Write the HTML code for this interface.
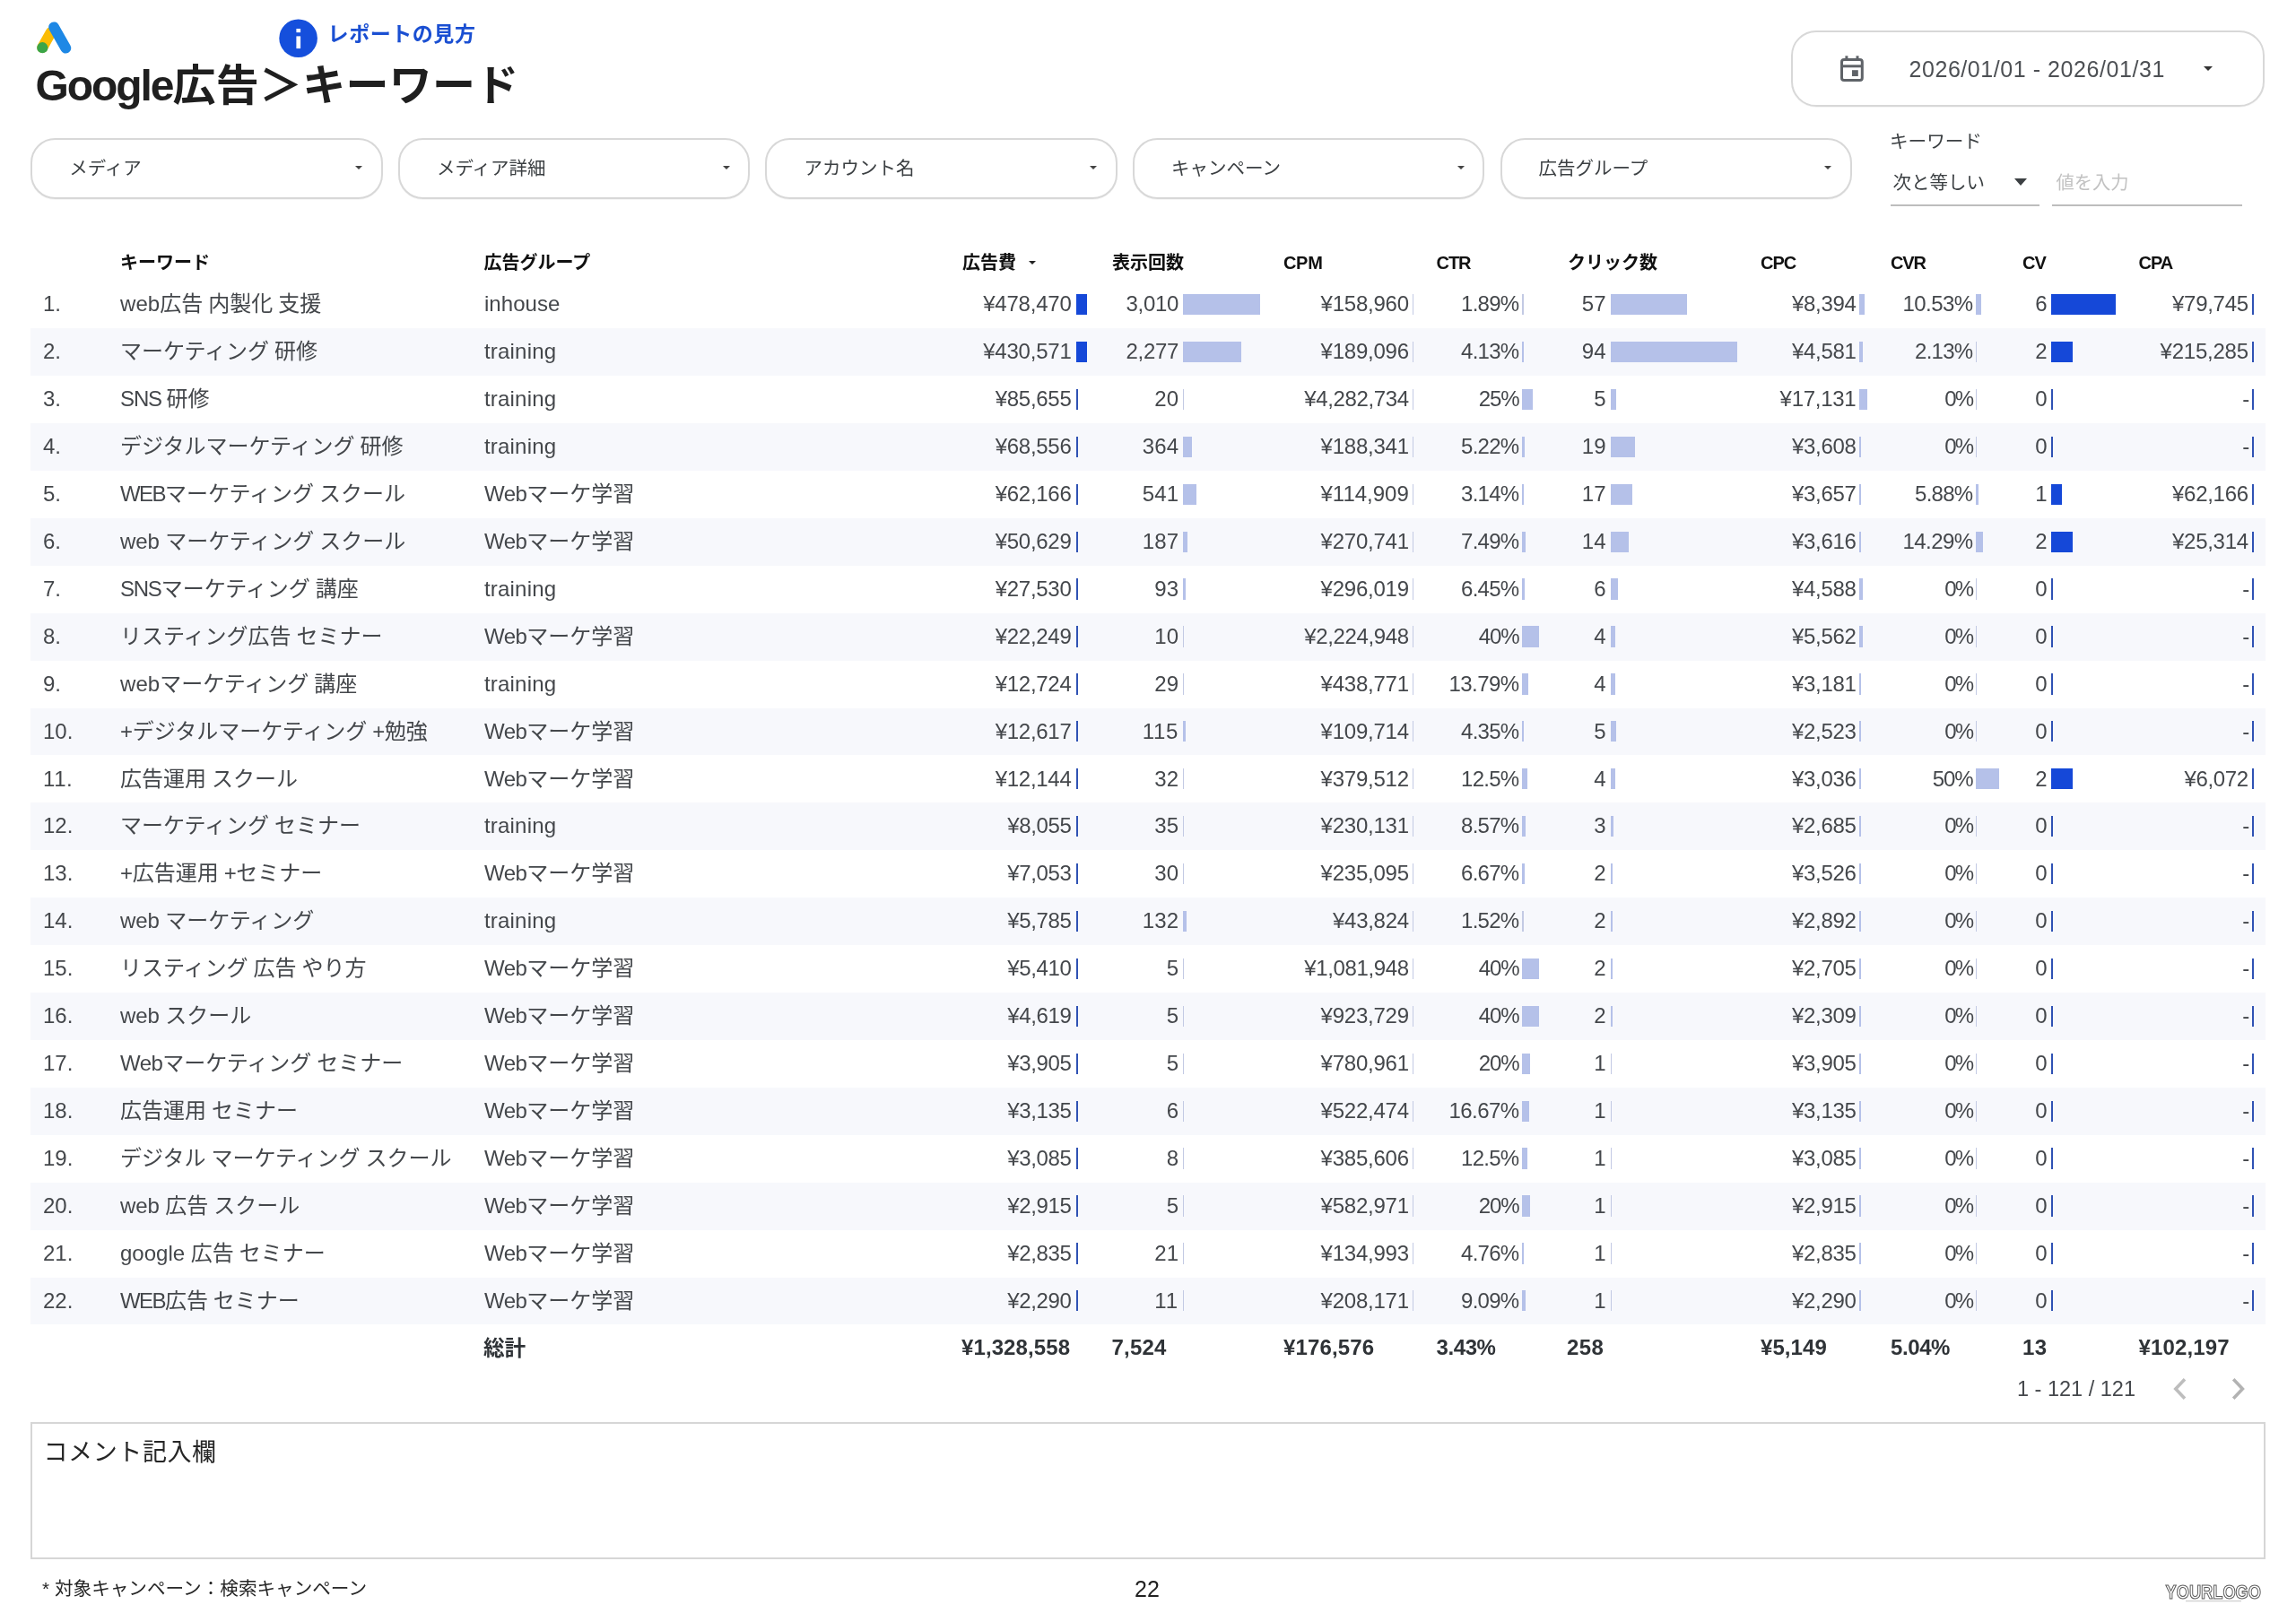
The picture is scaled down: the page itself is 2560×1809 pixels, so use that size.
<!DOCTYPE html>
<html lang="ja">
<head>
<meta charset="utf-8">
<title>Google広告＞キーワード</title>
<style>
*{box-sizing:border-box;margin:0;padding:0}
html,body{width:2560px;height:1809px;background:#fff;overflow:hidden}
body{position:relative;will-change:transform;font-family:"Liberation Sans","Noto Sans CJK JP",sans-serif;color:#3c4043}
.abs{position:absolute;white-space:nowrap}
.stripe{position:absolute;left:34px;width:2491.5px;height:52.92px;background:#f7f8fc}
.c{position:absolute;white-space:nowrap;font-size:24px;line-height:52px;height:52px;color:#44474b}
.n{}
.b{position:absolute;height:23.3px}
.h{position:absolute;white-space:nowrap;font-size:20px;font-weight:700;color:#111;line-height:30px;top:278px}
.tot{position:absolute;white-space:nowrap;font-size:24px;font-weight:700;color:#2f3337;line-height:40px;top:1483px}
.dd{position:absolute;top:153.6px;width:392.3px;height:68.1px;border:2px solid #d8d8d8;border-radius:27.5px;background:#fff;box-shadow:0 1px 0 rgba(0,0,0,.04)}
.dd span{position:absolute;left:41px;top:0;line-height:64px;font-size:20.5px;color:#3c4043;white-space:nowrap}
.dd i{position:absolute;right:20.6px;top:29.3px;width:0;height:0;border-left:4.3px solid transparent;border-right:4.3px solid transparent;border-top:4.6px solid #444}
</style>
</head>
<body>
<!-- logo -->
<svg class="abs" style="left:36px;top:18px" width="50" height="48" viewBox="36 18 50 48">
<line x1="47.3" y1="53" x2="56.6" y2="36.3" stroke="#fbbc04" stroke-width="12" stroke-linecap="round"/>
<line x1="60.1" y1="30.4" x2="73.3" y2="53.6" stroke="#1e88e5" stroke-width="12" stroke-linecap="round"/>
<circle cx="47.3" cy="53.2" r="6.1" fill="#3ba548"/>
</svg>
<!-- info -->
<svg class="abs" style="left:310px;top:20px" width="46" height="46" viewBox="310 20 46 46">
<circle cx="332.6" cy="42.7" r="21.3" fill="#154fdc"/>
<rect x="330.4" y="32" width="4.7" height="4.2" fill="#fff"/>
<rect x="330.4" y="40.4" width="4.7" height="13.7" fill="#fff"/>
</svg>
<div class="abs" style="left:365.6px;top:19.6px;font-size:23px;line-height:36px;font-weight:700;color:#1a4fd2;letter-spacing:0.55px">レポートの見方</div>
<div class="abs" id="title" style="left:39.5px;top:60px;font-size:48px;line-height:72px;font-weight:700;color:#1f1f1f"><span style="letter-spacing:-2.06px">Google</span><span style="letter-spacing:0.25px">広告＞キーワード</span></div>

<!-- date range -->
<div class="abs" style="left:1996.5px;top:34px;width:528.6px;height:84.6px;border:2px solid #d8d8d8;border-radius:28px;box-shadow:0 1px 0 rgba(0,0,0,.04)"></div>
<svg class="abs" style="left:2048px;top:58px" width="34" height="36" viewBox="2048 58 34 36" fill="none" stroke="#5f6368" stroke-width="3">
<rect x="2053.5" y="66.5" width="22.8" height="23" rx="2.6"/>
<line x1="2053" y1="73.8" x2="2077" y2="73.8"/>
<line x1="2058.9" y1="62.3" x2="2058.9" y2="67" stroke-linecap="butt"/>
<line x1="2071" y1="62.3" x2="2071" y2="67"/>
<rect x="2065" y="78.2" width="6.8" height="6.8" fill="#5f6368" stroke="none"/>
</svg>
<div class="abs" id="date" style="left:2128.5px;top:59px;font-size:25px;line-height:36px;color:#4d5054"><span style="letter-spacing:0.56px">2026/01/01 - 2026/01/31</span></div>
<div class="abs" style="left:2456.5px;top:74px;width:0;height:0;border-left:5.4px solid transparent;border-right:5.4px solid transparent;border-top:5.6px solid #333"></div>

<!-- dropdown filters -->
<div class="dd" style="left:34.3px"><span>メディア</span><i></i></div>
<div class="dd" style="left:443.9px"><span>メディア詳細</span><i></i></div>
<div class="dd" style="left:853.4px"><span>アカウント名</span><i></i></div>
<div class="dd" style="left:1263px"><span>キャンペーン</span><i></i></div>
<div class="dd" style="left:1672.5px"><span>広告グループ</span><i></i></div>

<!-- keyword filter -->
<div class="abs" style="left:2107px;top:142.5px;font-size:20.6px;line-height:30px;color:#3c4043">キーワード</div>
<div class="abs" style="left:2110.5px;top:189.4px;font-size:20.5px;line-height:30px;color:#3c4043">次と等しい</div>
<div class="abs" style="left:2246px;top:199.3px;width:0;height:0;border-left:7.3px solid transparent;border-right:7.3px solid transparent;border-top:8.2px solid #3c4043"></div>
<div class="abs" style="left:2107.8px;top:228.2px;width:166.5px;height:1.8px;background:#bdbdbd"></div>
<div class="abs" style="left:2292.5px;top:189.4px;font-size:20.3px;line-height:30px;color:#c2c2c2">値を入力</div>
<div class="abs" style="left:2288px;top:228.2px;width:212px;height:1.8px;background:#bdbdbd"></div>

<!-- table header -->
<div class="h" style="left:134px">キーワード</div>
<div class="h" style="left:539.5px">広告グループ</div>
<div class="h" style="left:1073px">広告費</div>
<div class="abs" style="left:1147.3px;top:290.8px;width:0;height:0;border-left:4.4px solid transparent;border-right:4.4px solid transparent;border-top:4.9px solid #222"></div>
<div class="h" style="left:1240px">表示回数</div>
<div class="h" style="left:1431px"><span style="letter-spacing:-0.32px">CPM</span></div>
<div class="h" style="left:1601.5px"><span style="letter-spacing:-1.03px">CTR</span></div>
<div class="h" style="left:1748px">クリック数</div>
<div class="h" style="left:1963px"><span style="letter-spacing:-1.06px">CPC</span></div>
<div class="h" style="left:2108px"><span style="letter-spacing:-1.09px">CVR</span></div>
<div class="h" style="left:2255px"><span style="letter-spacing:-0.82px">CV</span></div>
<div class="h" style="left:2384.5px"><span style="letter-spacing:-0.98px">CPA</span></div>
<!-- rows -->
<div class="c" style="left:48px;top:313.35px"><span style="letter-spacing:-0.09px">1.</span></div>
<div class="c" style="left:134px;top:313.35px"><span style="letter-spacing:0.07px">web</span>広告<span style="letter-spacing:-0.72px"> </span>内製化<span style="letter-spacing:-0.72px"> </span>支援</div>
<div class="c" style="left:540px;top:313.35px"><span style="letter-spacing:0.04px">inhouse</span></div>
<div class="c n" style="right:1365.5px;top:313.35px"><span style="letter-spacing:-0.23px">¥478,470</span></div>
<div class="b" style="left:1199.7px;top:327.95px;width:12.0px;background:#1548d8"></div>
<div class="c n" style="right:1245.8px;top:313.35px"><span style="letter-spacing:-0.28px">3,010</span></div>
<div class="b" style="left:1319.0px;top:327.95px;width:85.5px;background:#b5c1e9"></div>
<div class="c n" style="right:989.2px;top:313.35px"><span style="letter-spacing:-0.23px">¥158,960</span></div>
<div class="b" style="left:1575.4px;top:327.95px;width:1.0px;background:#c3cae4"></div>
<div class="c n" style="right:866.6px;top:313.35px"><span style="letter-spacing:-0.74px">1.89%</span></div>
<div class="b" style="left:1697.3px;top:327.95px;width:1.3px;background:#c3cae4"></div>
<div class="c n" style="right:769.2px;top:313.35px"><span style="letter-spacing:0.14px">57</span></div>
<div class="b" style="left:1796.0px;top:327.95px;width:84.7px;background:#b5c1e9"></div>
<div class="c n" style="right:490.6px;top:313.35px"><span style="letter-spacing:-0.35px">¥8,394</span></div>
<div class="b" style="left:2073.3px;top:327.95px;width:5.7px;background:#b5c1e9"></div>
<div class="c n" style="right:360.6px;top:313.35px"><span style="letter-spacing:-0.59px">10.53%</span></div>
<div class="b" style="left:2203.3px;top:327.95px;width:5.5px;background:#b5c1e9"></div>
<div class="c n" style="right:277.2px;top:313.35px"><span style="letter-spacing:0.14px">6</span></div>
<div class="b" style="left:2286.7px;top:327.95px;width:72.6px;background:#1548d8"></div>
<div class="c n" style="right:53.2px;top:313.35px"><span style="letter-spacing:-0.28px">¥79,745</span></div>
<div class="b" style="left:2510.7px;top:327.95px;width:2.2px;background:#2f52b4"></div>
<div class="stripe" style="top:366.27px"></div>
<div class="c" style="left:48px;top:366.27px"><span style="letter-spacing:-0.09px">2.</span></div>
<div class="c" style="left:134px;top:366.27px">マーケティング<span style="letter-spacing:-0.72px"> </span>研修</div>
<div class="c" style="left:540px;top:366.27px"><span style="letter-spacing:0.19px">training</span></div>
<div class="c n" style="right:1365.5px;top:366.27px"><span style="letter-spacing:-0.23px">¥430,571</span></div>
<div class="b" style="left:1199.7px;top:380.87px;width:12.0px;background:#1548d8"></div>
<div class="c n" style="right:1245.8px;top:366.27px"><span style="letter-spacing:-0.28px">2,277</span></div>
<div class="b" style="left:1319.0px;top:380.87px;width:64.7px;background:#b5c1e9"></div>
<div class="c n" style="right:989.2px;top:366.27px"><span style="letter-spacing:-0.23px">¥189,096</span></div>
<div class="b" style="left:1575.4px;top:380.87px;width:1.0px;background:#c3cae4"></div>
<div class="c n" style="right:866.6px;top:366.27px"><span style="letter-spacing:-0.74px">4.13%</span></div>
<div class="b" style="left:1697.3px;top:380.87px;width:1.9px;background:#b5c1e9"></div>
<div class="c n" style="right:769.2px;top:366.27px"><span style="letter-spacing:0.14px">94</span></div>
<div class="b" style="left:1796.0px;top:380.87px;width:140.7px;background:#b5c1e9"></div>
<div class="c n" style="right:490.6px;top:366.27px"><span style="letter-spacing:-0.35px">¥4,581</span></div>
<div class="b" style="left:2073.3px;top:380.87px;width:3.7px;background:#b5c1e9"></div>
<div class="c n" style="right:360.6px;top:366.27px"><span style="letter-spacing:-0.74px">2.13%</span></div>
<div class="b" style="left:2203.3px;top:380.87px;width:1.1px;background:#c3cae4"></div>
<div class="c n" style="right:277.2px;top:366.27px"><span style="letter-spacing:0.14px">2</span></div>
<div class="b" style="left:2286.7px;top:380.87px;width:24.2px;background:#1548d8"></div>
<div class="c n" style="right:53.2px;top:366.27px"><span style="letter-spacing:-0.23px">¥215,285</span></div>
<div class="b" style="left:2510.7px;top:380.87px;width:2.2px;background:#2f52b4"></div>
<div class="c" style="left:48px;top:419.18px"><span style="letter-spacing:-0.09px">3.</span></div>
<div class="c" style="left:134px;top:419.18px"><span style="letter-spacing:-1.11px">SNS </span>研修</div>
<div class="c" style="left:540px;top:419.18px"><span style="letter-spacing:0.19px">training</span></div>
<div class="c n" style="right:1365.5px;top:419.18px"><span style="letter-spacing:-0.28px">¥85,655</span></div>
<div class="b" style="left:1199.7px;top:433.78px;width:2.1px;background:#2f52b4"></div>
<div class="c n" style="right:1245.8px;top:419.18px"><span style="letter-spacing:0.14px">20</span></div>
<div class="b" style="left:1319.0px;top:433.78px;width:1.0px;background:#c3cae4"></div>
<div class="c n" style="right:989.2px;top:419.18px"><span style="letter-spacing:-0.36px">¥4,282,734</span></div>
<div class="b" style="left:1575.4px;top:433.78px;width:1.0px;background:#c3cae4"></div>
<div class="c n" style="right:866.6px;top:419.18px"><span style="letter-spacing:-1.16px">25%</span></div>
<div class="b" style="left:1697.3px;top:433.78px;width:11.4px;background:#b5c1e9"></div>
<div class="c n" style="right:769.2px;top:419.18px"><span style="letter-spacing:0.14px">5</span></div>
<div class="b" style="left:1796.0px;top:433.78px;width:6.1px;background:#b5c1e9"></div>
<div class="c n" style="right:490.6px;top:419.18px"><span style="letter-spacing:-0.28px">¥17,131</span></div>
<div class="b" style="left:2073.3px;top:433.78px;width:8.3px;background:#b5c1e9"></div>
<div class="c n" style="right:360.6px;top:419.18px"><span style="letter-spacing:-1.80px">0%</span></div>
<div class="b" style="left:2203.3px;top:433.78px;width:1.0px;background:#c3cae4"></div>
<div class="c n" style="right:277.2px;top:419.18px"><span style="letter-spacing:0.14px">0</span></div>
<div class="b" style="left:2286.7px;top:433.78px;width:2.2px;background:#2f52b4"></div>
<div class="c n" style="right:53.2px;top:419.18px"><span style="letter-spacing:-1.36px">-</span></div>
<div class="b" style="left:2510.7px;top:433.78px;width:2.2px;background:#2f52b4"></div>
<div class="stripe" style="top:472.10px"></div>
<div class="c" style="left:48px;top:472.10px"><span style="letter-spacing:-0.09px">4.</span></div>
<div class="c" style="left:134px;top:472.10px">デジタルマーケティング<span style="letter-spacing:-0.72px"> </span>研修</div>
<div class="c" style="left:540px;top:472.10px"><span style="letter-spacing:0.19px">training</span></div>
<div class="c n" style="right:1365.5px;top:472.10px"><span style="letter-spacing:-0.28px">¥68,556</span></div>
<div class="b" style="left:1199.7px;top:486.70px;width:2.1px;background:#2f52b4"></div>
<div class="c n" style="right:1245.8px;top:472.10px"><span style="letter-spacing:0.14px">364</span></div>
<div class="b" style="left:1319.0px;top:486.70px;width:10.3px;background:#b5c1e9"></div>
<div class="c n" style="right:989.2px;top:472.10px"><span style="letter-spacing:-0.23px">¥188,341</span></div>
<div class="b" style="left:1575.4px;top:486.70px;width:1.0px;background:#c3cae4"></div>
<div class="c n" style="right:866.6px;top:472.10px"><span style="letter-spacing:-0.74px">5.22%</span></div>
<div class="b" style="left:1697.3px;top:486.70px;width:2.4px;background:#b5c1e9"></div>
<div class="c n" style="right:769.2px;top:472.10px"><span style="letter-spacing:0.14px">19</span></div>
<div class="b" style="left:1796.0px;top:486.70px;width:27.2px;background:#b5c1e9"></div>
<div class="c n" style="right:490.6px;top:472.10px"><span style="letter-spacing:-0.35px">¥3,608</span></div>
<div class="b" style="left:2073.3px;top:486.70px;width:2.0px;background:#b5c1e9"></div>
<div class="c n" style="right:360.6px;top:472.10px"><span style="letter-spacing:-1.80px">0%</span></div>
<div class="b" style="left:2203.3px;top:486.70px;width:1.0px;background:#c3cae4"></div>
<div class="c n" style="right:277.2px;top:472.10px"><span style="letter-spacing:0.14px">0</span></div>
<div class="b" style="left:2286.7px;top:486.70px;width:2.2px;background:#2f52b4"></div>
<div class="c n" style="right:53.2px;top:472.10px"><span style="letter-spacing:-1.36px">-</span></div>
<div class="b" style="left:2510.7px;top:486.70px;width:2.2px;background:#2f52b4"></div>
<div class="c" style="left:48px;top:525.01px"><span style="letter-spacing:-0.09px">5.</span></div>
<div class="c" style="left:134px;top:525.01px"><span style="letter-spacing:-1.59px">WEB</span>マーケティング<span style="letter-spacing:-0.72px"> </span>スクール</div>
<div class="c" style="left:540px;top:525.01px"><span style="letter-spacing:-0.59px">Web</span>マーケ学習</div>
<div class="c n" style="right:1365.5px;top:525.01px"><span style="letter-spacing:-0.28px">¥62,166</span></div>
<div class="b" style="left:1199.7px;top:539.61px;width:2.1px;background:#2f52b4"></div>
<div class="c n" style="right:1245.8px;top:525.01px"><span style="letter-spacing:0.14px">541</span></div>
<div class="b" style="left:1319.0px;top:539.61px;width:15.3px;background:#b5c1e9"></div>
<div class="c n" style="right:989.2px;top:525.01px">¥114,909</div>
<div class="b" style="left:1575.4px;top:539.61px;width:1.0px;background:#c3cae4"></div>
<div class="c n" style="right:866.6px;top:525.01px"><span style="letter-spacing:-0.74px">3.14%</span></div>
<div class="b" style="left:1697.3px;top:539.61px;width:1.4px;background:#b5c1e9"></div>
<div class="c n" style="right:769.2px;top:525.01px"><span style="letter-spacing:0.14px">17</span></div>
<div class="b" style="left:1796.0px;top:539.61px;width:24.2px;background:#b5c1e9"></div>
<div class="c n" style="right:490.6px;top:525.01px"><span style="letter-spacing:-0.35px">¥3,657</span></div>
<div class="b" style="left:2073.3px;top:539.61px;width:2.0px;background:#b5c1e9"></div>
<div class="c n" style="right:360.6px;top:525.01px"><span style="letter-spacing:-0.74px">5.88%</span></div>
<div class="b" style="left:2203.3px;top:539.61px;width:3.1px;background:#b5c1e9"></div>
<div class="c n" style="right:277.2px;top:525.01px"><span style="letter-spacing:0.14px">1</span></div>
<div class="b" style="left:2286.7px;top:539.61px;width:12.1px;background:#1548d8"></div>
<div class="c n" style="right:53.2px;top:525.01px"><span style="letter-spacing:-0.28px">¥62,166</span></div>
<div class="b" style="left:2510.7px;top:539.61px;width:2.2px;background:#2f52b4"></div>
<div class="stripe" style="top:577.93px"></div>
<div class="c" style="left:48px;top:577.93px"><span style="letter-spacing:-0.09px">6.</span></div>
<div class="c" style="left:134px;top:577.93px"><span style="letter-spacing:-0.12px">web </span>マーケティング<span style="letter-spacing:-0.72px"> </span>スクール</div>
<div class="c" style="left:540px;top:577.93px"><span style="letter-spacing:-0.59px">Web</span>マーケ学習</div>
<div class="c n" style="right:1365.5px;top:577.93px"><span style="letter-spacing:-0.28px">¥50,629</span></div>
<div class="b" style="left:1199.7px;top:592.53px;width:2.1px;background:#2f52b4"></div>
<div class="c n" style="right:1245.8px;top:577.93px"><span style="letter-spacing:0.14px">187</span></div>
<div class="b" style="left:1319.0px;top:592.53px;width:5.3px;background:#b5c1e9"></div>
<div class="c n" style="right:989.2px;top:577.93px"><span style="letter-spacing:-0.23px">¥270,741</span></div>
<div class="b" style="left:1575.4px;top:592.53px;width:1.0px;background:#c3cae4"></div>
<div class="c n" style="right:866.6px;top:577.93px"><span style="letter-spacing:-0.74px">7.49%</span></div>
<div class="b" style="left:1697.3px;top:592.53px;width:3.4px;background:#b5c1e9"></div>
<div class="c n" style="right:769.2px;top:577.93px"><span style="letter-spacing:0.14px">14</span></div>
<div class="b" style="left:1796.0px;top:592.53px;width:19.7px;background:#b5c1e9"></div>
<div class="c n" style="right:490.6px;top:577.93px"><span style="letter-spacing:-0.35px">¥3,616</span></div>
<div class="b" style="left:2073.3px;top:592.53px;width:2.0px;background:#b5c1e9"></div>
<div class="c n" style="right:360.6px;top:577.93px"><span style="letter-spacing:-0.59px">14.29%</span></div>
<div class="b" style="left:2203.3px;top:592.53px;width:7.4px;background:#b5c1e9"></div>
<div class="c n" style="right:277.2px;top:577.93px"><span style="letter-spacing:0.14px">2</span></div>
<div class="b" style="left:2286.7px;top:592.53px;width:24.2px;background:#1548d8"></div>
<div class="c n" style="right:53.2px;top:577.93px"><span style="letter-spacing:-0.28px">¥25,314</span></div>
<div class="b" style="left:2510.7px;top:592.53px;width:2.2px;background:#2f52b4"></div>
<div class="c" style="left:48px;top:630.85px"><span style="letter-spacing:-0.09px">7.</span></div>
<div class="c" style="left:134px;top:630.85px"><span style="letter-spacing:-1.24px">SNS</span>マーケティング<span style="letter-spacing:-0.72px"> </span>講座</div>
<div class="c" style="left:540px;top:630.85px"><span style="letter-spacing:0.19px">training</span></div>
<div class="c n" style="right:1365.5px;top:630.85px"><span style="letter-spacing:-0.28px">¥27,530</span></div>
<div class="b" style="left:1199.7px;top:645.45px;width:2.1px;background:#2f52b4"></div>
<div class="c n" style="right:1245.8px;top:630.85px"><span style="letter-spacing:0.14px">93</span></div>
<div class="b" style="left:1319.0px;top:645.45px;width:2.6px;background:#b5c1e9"></div>
<div class="c n" style="right:989.2px;top:630.85px"><span style="letter-spacing:-0.23px">¥296,019</span></div>
<div class="b" style="left:1575.4px;top:645.45px;width:1.0px;background:#c3cae4"></div>
<div class="c n" style="right:866.6px;top:630.85px"><span style="letter-spacing:-0.74px">6.45%</span></div>
<div class="b" style="left:1697.3px;top:645.45px;width:3.0px;background:#b5c1e9"></div>
<div class="c n" style="right:769.2px;top:630.85px"><span style="letter-spacing:0.14px">6</span></div>
<div class="b" style="left:1796.0px;top:645.45px;width:7.6px;background:#b5c1e9"></div>
<div class="c n" style="right:490.6px;top:630.85px"><span style="letter-spacing:-0.35px">¥4,588</span></div>
<div class="b" style="left:2073.3px;top:645.45px;width:3.5px;background:#b5c1e9"></div>
<div class="c n" style="right:360.6px;top:630.85px"><span style="letter-spacing:-1.80px">0%</span></div>
<div class="b" style="left:2203.3px;top:645.45px;width:1.0px;background:#c3cae4"></div>
<div class="c n" style="right:277.2px;top:630.85px"><span style="letter-spacing:0.14px">0</span></div>
<div class="b" style="left:2286.7px;top:645.45px;width:2.2px;background:#2f52b4"></div>
<div class="c n" style="right:53.2px;top:630.85px"><span style="letter-spacing:-1.36px">-</span></div>
<div class="b" style="left:2510.7px;top:645.45px;width:2.2px;background:#2f52b4"></div>
<div class="stripe" style="top:683.76px"></div>
<div class="c" style="left:48px;top:683.76px"><span style="letter-spacing:-0.09px">8.</span></div>
<div class="c" style="left:134px;top:683.76px">リスティング広告<span style="letter-spacing:-0.72px"> </span>セミナー</div>
<div class="c" style="left:540px;top:683.76px"><span style="letter-spacing:-0.59px">Web</span>マーケ学習</div>
<div class="c n" style="right:1365.5px;top:683.76px"><span style="letter-spacing:-0.28px">¥22,249</span></div>
<div class="b" style="left:1199.7px;top:698.36px;width:2.1px;background:#2f52b4"></div>
<div class="c n" style="right:1245.8px;top:683.76px"><span style="letter-spacing:0.14px">10</span></div>
<div class="b" style="left:1319.0px;top:698.36px;width:1.0px;background:#c3cae4"></div>
<div class="c n" style="right:989.2px;top:683.76px"><span style="letter-spacing:-0.36px">¥2,224,948</span></div>
<div class="b" style="left:1575.4px;top:698.36px;width:1.0px;background:#c3cae4"></div>
<div class="c n" style="right:866.6px;top:683.76px"><span style="letter-spacing:-1.16px">40%</span></div>
<div class="b" style="left:1697.3px;top:698.36px;width:18.3px;background:#b5c1e9"></div>
<div class="c n" style="right:769.2px;top:683.76px"><span style="letter-spacing:0.14px">4</span></div>
<div class="b" style="left:1796.0px;top:698.36px;width:4.5px;background:#b5c1e9"></div>
<div class="c n" style="right:490.6px;top:683.76px"><span style="letter-spacing:-0.35px">¥5,562</span></div>
<div class="b" style="left:2073.3px;top:698.36px;width:4.0px;background:#b5c1e9"></div>
<div class="c n" style="right:360.6px;top:683.76px"><span style="letter-spacing:-1.80px">0%</span></div>
<div class="b" style="left:2203.3px;top:698.36px;width:1.0px;background:#c3cae4"></div>
<div class="c n" style="right:277.2px;top:683.76px"><span style="letter-spacing:0.14px">0</span></div>
<div class="b" style="left:2286.7px;top:698.36px;width:2.2px;background:#2f52b4"></div>
<div class="c n" style="right:53.2px;top:683.76px"><span style="letter-spacing:-1.36px">-</span></div>
<div class="b" style="left:2510.7px;top:698.36px;width:2.2px;background:#2f52b4"></div>
<div class="c" style="left:48px;top:736.68px"><span style="letter-spacing:-0.09px">9.</span></div>
<div class="c" style="left:134px;top:736.68px"><span style="letter-spacing:0.07px">web</span>マーケティング<span style="letter-spacing:-0.72px"> </span>講座</div>
<div class="c" style="left:540px;top:736.68px"><span style="letter-spacing:0.19px">training</span></div>
<div class="c n" style="right:1365.5px;top:736.68px"><span style="letter-spacing:-0.28px">¥12,724</span></div>
<div class="b" style="left:1199.7px;top:751.28px;width:2.1px;background:#2f52b4"></div>
<div class="c n" style="right:1245.8px;top:736.68px"><span style="letter-spacing:0.14px">29</span></div>
<div class="b" style="left:1319.0px;top:751.28px;width:1.0px;background:#c3cae4"></div>
<div class="c n" style="right:989.2px;top:736.68px"><span style="letter-spacing:-0.23px">¥438,771</span></div>
<div class="b" style="left:1575.4px;top:751.28px;width:1.0px;background:#c3cae4"></div>
<div class="c n" style="right:866.6px;top:736.68px"><span style="letter-spacing:-0.59px">13.79%</span></div>
<div class="b" style="left:1697.3px;top:751.28px;width:6.3px;background:#b5c1e9"></div>
<div class="c n" style="right:769.2px;top:736.68px"><span style="letter-spacing:0.14px">4</span></div>
<div class="b" style="left:1796.0px;top:751.28px;width:4.5px;background:#b5c1e9"></div>
<div class="c n" style="right:490.6px;top:736.68px"><span style="letter-spacing:-0.35px">¥3,181</span></div>
<div class="b" style="left:2073.3px;top:751.28px;width:1.6px;background:#b5c1e9"></div>
<div class="c n" style="right:360.6px;top:736.68px"><span style="letter-spacing:-1.80px">0%</span></div>
<div class="b" style="left:2203.3px;top:751.28px;width:1.0px;background:#c3cae4"></div>
<div class="c n" style="right:277.2px;top:736.68px"><span style="letter-spacing:0.14px">0</span></div>
<div class="b" style="left:2286.7px;top:751.28px;width:2.2px;background:#2f52b4"></div>
<div class="c n" style="right:53.2px;top:736.68px"><span style="letter-spacing:-1.36px">-</span></div>
<div class="b" style="left:2510.7px;top:751.28px;width:2.2px;background:#2f52b4"></div>
<div class="stripe" style="top:789.59px"></div>
<div class="c" style="left:48px;top:789.59px"><span style="letter-spacing:-0.02px">10.</span></div>
<div class="c" style="left:134px;top:789.59px"><span style="letter-spacing:-0.39px">+</span>デジタルマーケティング<span style="letter-spacing:-0.55px"> +</span>勉強</div>
<div class="c" style="left:540px;top:789.59px"><span style="letter-spacing:-0.59px">Web</span>マーケ学習</div>
<div class="c n" style="right:1365.5px;top:789.59px"><span style="letter-spacing:-0.28px">¥12,617</span></div>
<div class="b" style="left:1199.7px;top:804.19px;width:2.1px;background:#2f52b4"></div>
<div class="c n" style="right:1245.8px;top:789.59px"><span style="letter-spacing:0.73px">115</span></div>
<div class="b" style="left:1319.0px;top:804.19px;width:3.2px;background:#b5c1e9"></div>
<div class="c n" style="right:989.2px;top:789.59px"><span style="letter-spacing:-0.23px">¥109,714</span></div>
<div class="b" style="left:1575.4px;top:804.19px;width:1.0px;background:#c3cae4"></div>
<div class="c n" style="right:866.6px;top:789.59px"><span style="letter-spacing:-0.74px">4.35%</span></div>
<div class="b" style="left:1697.3px;top:804.19px;width:2.0px;background:#b5c1e9"></div>
<div class="c n" style="right:769.2px;top:789.59px"><span style="letter-spacing:0.14px">5</span></div>
<div class="b" style="left:1796.0px;top:804.19px;width:6.1px;background:#b5c1e9"></div>
<div class="c n" style="right:490.6px;top:789.59px"><span style="letter-spacing:-0.35px">¥2,523</span></div>
<div class="b" style="left:2073.3px;top:804.19px;width:1.6px;background:#b5c1e9"></div>
<div class="c n" style="right:360.6px;top:789.59px"><span style="letter-spacing:-1.80px">0%</span></div>
<div class="b" style="left:2203.3px;top:804.19px;width:1.0px;background:#c3cae4"></div>
<div class="c n" style="right:277.2px;top:789.59px"><span style="letter-spacing:0.14px">0</span></div>
<div class="b" style="left:2286.7px;top:804.19px;width:2.2px;background:#2f52b4"></div>
<div class="c n" style="right:53.2px;top:789.59px"><span style="letter-spacing:-1.36px">-</span></div>
<div class="b" style="left:2510.7px;top:804.19px;width:2.2px;background:#2f52b4"></div>
<div class="c" style="left:48px;top:842.51px"><span style="letter-spacing:0.57px">11.</span></div>
<div class="c" style="left:134px;top:842.51px">広告運用<span style="letter-spacing:-0.72px"> </span>スクール</div>
<div class="c" style="left:540px;top:842.51px"><span style="letter-spacing:-0.59px">Web</span>マーケ学習</div>
<div class="c n" style="right:1365.5px;top:842.51px"><span style="letter-spacing:-0.28px">¥12,144</span></div>
<div class="b" style="left:1199.7px;top:857.11px;width:2.1px;background:#2f52b4"></div>
<div class="c n" style="right:1245.8px;top:842.51px"><span style="letter-spacing:0.14px">32</span></div>
<div class="b" style="left:1319.0px;top:857.11px;width:1.0px;background:#c3cae4"></div>
<div class="c n" style="right:989.2px;top:842.51px"><span style="letter-spacing:-0.23px">¥379,512</span></div>
<div class="b" style="left:1575.4px;top:857.11px;width:1.0px;background:#c3cae4"></div>
<div class="c n" style="right:866.6px;top:842.51px"><span style="letter-spacing:-0.74px">12.5%</span></div>
<div class="b" style="left:1697.3px;top:857.11px;width:5.7px;background:#b5c1e9"></div>
<div class="c n" style="right:769.2px;top:842.51px"><span style="letter-spacing:0.14px">4</span></div>
<div class="b" style="left:1796.0px;top:857.11px;width:4.5px;background:#b5c1e9"></div>
<div class="c n" style="right:490.6px;top:842.51px"><span style="letter-spacing:-0.35px">¥3,036</span></div>
<div class="b" style="left:2073.3px;top:857.11px;width:1.6px;background:#b5c1e9"></div>
<div class="c n" style="right:360.6px;top:842.51px"><span style="letter-spacing:-1.16px">50%</span></div>
<div class="b" style="left:2203.3px;top:857.11px;width:26.0px;background:#b5c1e9"></div>
<div class="c n" style="right:277.2px;top:842.51px"><span style="letter-spacing:0.14px">2</span></div>
<div class="b" style="left:2286.7px;top:857.11px;width:24.2px;background:#1548d8"></div>
<div class="c n" style="right:53.2px;top:842.51px"><span style="letter-spacing:-0.35px">¥6,072</span></div>
<div class="b" style="left:2510.7px;top:857.11px;width:2.2px;background:#2f52b4"></div>
<div class="stripe" style="top:895.43px"></div>
<div class="c" style="left:48px;top:895.43px"><span style="letter-spacing:-0.02px">12.</span></div>
<div class="c" style="left:134px;top:895.43px">マーケティング<span style="letter-spacing:-0.72px"> </span>セミナー</div>
<div class="c" style="left:540px;top:895.43px"><span style="letter-spacing:0.19px">training</span></div>
<div class="c n" style="right:1365.5px;top:895.43px"><span style="letter-spacing:-0.35px">¥8,055</span></div>
<div class="b" style="left:1199.7px;top:910.03px;width:2.1px;background:#2f52b4"></div>
<div class="c n" style="right:1245.8px;top:895.43px"><span style="letter-spacing:0.14px">35</span></div>
<div class="b" style="left:1319.0px;top:910.03px;width:1.0px;background:#c3cae4"></div>
<div class="c n" style="right:989.2px;top:895.43px"><span style="letter-spacing:-0.23px">¥230,131</span></div>
<div class="b" style="left:1575.4px;top:910.03px;width:1.0px;background:#c3cae4"></div>
<div class="c n" style="right:866.6px;top:895.43px"><span style="letter-spacing:-0.74px">8.57%</span></div>
<div class="b" style="left:1697.3px;top:910.03px;width:3.9px;background:#b5c1e9"></div>
<div class="c n" style="right:769.2px;top:895.43px"><span style="letter-spacing:0.14px">3</span></div>
<div class="b" style="left:1796.0px;top:910.03px;width:3.0px;background:#b5c1e9"></div>
<div class="c n" style="right:490.6px;top:895.43px"><span style="letter-spacing:-0.35px">¥2,685</span></div>
<div class="b" style="left:2073.3px;top:910.03px;width:1.6px;background:#b5c1e9"></div>
<div class="c n" style="right:360.6px;top:895.43px"><span style="letter-spacing:-1.80px">0%</span></div>
<div class="b" style="left:2203.3px;top:910.03px;width:1.0px;background:#c3cae4"></div>
<div class="c n" style="right:277.2px;top:895.43px"><span style="letter-spacing:0.14px">0</span></div>
<div class="b" style="left:2286.7px;top:910.03px;width:2.2px;background:#2f52b4"></div>
<div class="c n" style="right:53.2px;top:895.43px"><span style="letter-spacing:-1.36px">-</span></div>
<div class="b" style="left:2510.7px;top:910.03px;width:2.2px;background:#2f52b4"></div>
<div class="c" style="left:48px;top:948.34px"><span style="letter-spacing:-0.02px">13.</span></div>
<div class="c" style="left:134px;top:948.34px"><span style="letter-spacing:-0.39px">+</span>広告運用<span style="letter-spacing:-0.55px"> +</span>セミナー</div>
<div class="c" style="left:540px;top:948.34px"><span style="letter-spacing:-0.59px">Web</span>マーケ学習</div>
<div class="c n" style="right:1365.5px;top:948.34px"><span style="letter-spacing:-0.35px">¥7,053</span></div>
<div class="b" style="left:1199.7px;top:962.94px;width:2.1px;background:#2f52b4"></div>
<div class="c n" style="right:1245.8px;top:948.34px"><span style="letter-spacing:0.14px">30</span></div>
<div class="b" style="left:1319.0px;top:962.94px;width:1.0px;background:#c3cae4"></div>
<div class="c n" style="right:989.2px;top:948.34px"><span style="letter-spacing:-0.23px">¥235,095</span></div>
<div class="b" style="left:1575.4px;top:962.94px;width:1.0px;background:#c3cae4"></div>
<div class="c n" style="right:866.6px;top:948.34px"><span style="letter-spacing:-0.74px">6.67%</span></div>
<div class="b" style="left:1697.3px;top:962.94px;width:3.1px;background:#b5c1e9"></div>
<div class="c n" style="right:769.2px;top:948.34px"><span style="letter-spacing:0.14px">2</span></div>
<div class="b" style="left:1796.0px;top:962.94px;width:1.5px;background:#b5c1e9"></div>
<div class="c n" style="right:490.6px;top:948.34px"><span style="letter-spacing:-0.35px">¥3,526</span></div>
<div class="b" style="left:2073.3px;top:962.94px;width:2.0px;background:#b5c1e9"></div>
<div class="c n" style="right:360.6px;top:948.34px"><span style="letter-spacing:-1.80px">0%</span></div>
<div class="b" style="left:2203.3px;top:962.94px;width:1.0px;background:#c3cae4"></div>
<div class="c n" style="right:277.2px;top:948.34px"><span style="letter-spacing:0.14px">0</span></div>
<div class="b" style="left:2286.7px;top:962.94px;width:2.2px;background:#2f52b4"></div>
<div class="c n" style="right:53.2px;top:948.34px"><span style="letter-spacing:-1.36px">-</span></div>
<div class="b" style="left:2510.7px;top:962.94px;width:2.2px;background:#2f52b4"></div>
<div class="stripe" style="top:1001.26px"></div>
<div class="c" style="left:48px;top:1001.26px"><span style="letter-spacing:-0.02px">14.</span></div>
<div class="c" style="left:134px;top:1001.26px"><span style="letter-spacing:-0.12px">web </span>マーケティング</div>
<div class="c" style="left:540px;top:1001.26px"><span style="letter-spacing:0.19px">training</span></div>
<div class="c n" style="right:1365.5px;top:1001.26px"><span style="letter-spacing:-0.35px">¥5,785</span></div>
<div class="b" style="left:1199.7px;top:1015.86px;width:2.1px;background:#2f52b4"></div>
<div class="c n" style="right:1245.8px;top:1001.26px"><span style="letter-spacing:0.14px">132</span></div>
<div class="b" style="left:1319.0px;top:1015.86px;width:3.7px;background:#b5c1e9"></div>
<div class="c n" style="right:989.2px;top:1001.26px"><span style="letter-spacing:-0.28px">¥43,824</span></div>
<div class="b" style="left:1575.4px;top:1015.86px;width:1.0px;background:#c3cae4"></div>
<div class="c n" style="right:866.6px;top:1001.26px"><span style="letter-spacing:-0.74px">1.52%</span></div>
<div class="b" style="left:1697.3px;top:1015.86px;width:1.3px;background:#c3cae4"></div>
<div class="c n" style="right:769.2px;top:1001.26px"><span style="letter-spacing:0.14px">2</span></div>
<div class="b" style="left:1796.0px;top:1015.86px;width:1.5px;background:#b5c1e9"></div>
<div class="c n" style="right:490.6px;top:1001.26px"><span style="letter-spacing:-0.35px">¥2,892</span></div>
<div class="b" style="left:2073.3px;top:1015.86px;width:1.6px;background:#b5c1e9"></div>
<div class="c n" style="right:360.6px;top:1001.26px"><span style="letter-spacing:-1.80px">0%</span></div>
<div class="b" style="left:2203.3px;top:1015.86px;width:1.0px;background:#c3cae4"></div>
<div class="c n" style="right:277.2px;top:1001.26px"><span style="letter-spacing:0.14px">0</span></div>
<div class="b" style="left:2286.7px;top:1015.86px;width:2.2px;background:#2f52b4"></div>
<div class="c n" style="right:53.2px;top:1001.26px"><span style="letter-spacing:-1.36px">-</span></div>
<div class="b" style="left:2510.7px;top:1015.86px;width:2.2px;background:#2f52b4"></div>
<div class="c" style="left:48px;top:1054.17px"><span style="letter-spacing:-0.02px">15.</span></div>
<div class="c" style="left:134px;top:1054.17px">リスティング<span style="letter-spacing:-0.72px"> </span>広告<span style="letter-spacing:-0.72px"> </span>やり方</div>
<div class="c" style="left:540px;top:1054.17px"><span style="letter-spacing:-0.59px">Web</span>マーケ学習</div>
<div class="c n" style="right:1365.5px;top:1054.17px"><span style="letter-spacing:-0.35px">¥5,410</span></div>
<div class="b" style="left:1199.7px;top:1068.77px;width:2.1px;background:#2f52b4"></div>
<div class="c n" style="right:1245.8px;top:1054.17px"><span style="letter-spacing:0.14px">5</span></div>
<div class="b" style="left:1319.0px;top:1068.77px;width:1.0px;background:#c3cae4"></div>
<div class="c n" style="right:989.2px;top:1054.17px"><span style="letter-spacing:-0.36px">¥1,081,948</span></div>
<div class="b" style="left:1575.4px;top:1068.77px;width:1.0px;background:#c3cae4"></div>
<div class="c n" style="right:866.6px;top:1054.17px"><span style="letter-spacing:-1.16px">40%</span></div>
<div class="b" style="left:1697.3px;top:1068.77px;width:18.3px;background:#b5c1e9"></div>
<div class="c n" style="right:769.2px;top:1054.17px"><span style="letter-spacing:0.14px">2</span></div>
<div class="b" style="left:1796.0px;top:1068.77px;width:1.5px;background:#b5c1e9"></div>
<div class="c n" style="right:490.6px;top:1054.17px"><span style="letter-spacing:-0.35px">¥2,705</span></div>
<div class="b" style="left:2073.3px;top:1068.77px;width:1.6px;background:#b5c1e9"></div>
<div class="c n" style="right:360.6px;top:1054.17px"><span style="letter-spacing:-1.80px">0%</span></div>
<div class="b" style="left:2203.3px;top:1068.77px;width:1.0px;background:#c3cae4"></div>
<div class="c n" style="right:277.2px;top:1054.17px"><span style="letter-spacing:0.14px">0</span></div>
<div class="b" style="left:2286.7px;top:1068.77px;width:2.2px;background:#2f52b4"></div>
<div class="c n" style="right:53.2px;top:1054.17px"><span style="letter-spacing:-1.36px">-</span></div>
<div class="b" style="left:2510.7px;top:1068.77px;width:2.2px;background:#2f52b4"></div>
<div class="stripe" style="top:1107.09px"></div>
<div class="c" style="left:48px;top:1107.09px"><span style="letter-spacing:-0.02px">16.</span></div>
<div class="c" style="left:134px;top:1107.09px"><span style="letter-spacing:-0.12px">web </span>スクール</div>
<div class="c" style="left:540px;top:1107.09px"><span style="letter-spacing:-0.59px">Web</span>マーケ学習</div>
<div class="c n" style="right:1365.5px;top:1107.09px"><span style="letter-spacing:-0.35px">¥4,619</span></div>
<div class="b" style="left:1199.7px;top:1121.69px;width:2.1px;background:#2f52b4"></div>
<div class="c n" style="right:1245.8px;top:1107.09px"><span style="letter-spacing:0.14px">5</span></div>
<div class="b" style="left:1319.0px;top:1121.69px;width:1.0px;background:#c3cae4"></div>
<div class="c n" style="right:989.2px;top:1107.09px"><span style="letter-spacing:-0.23px">¥923,729</span></div>
<div class="b" style="left:1575.4px;top:1121.69px;width:1.0px;background:#c3cae4"></div>
<div class="c n" style="right:866.6px;top:1107.09px"><span style="letter-spacing:-1.16px">40%</span></div>
<div class="b" style="left:1697.3px;top:1121.69px;width:18.3px;background:#b5c1e9"></div>
<div class="c n" style="right:769.2px;top:1107.09px"><span style="letter-spacing:0.14px">2</span></div>
<div class="b" style="left:1796.0px;top:1121.69px;width:1.5px;background:#b5c1e9"></div>
<div class="c n" style="right:490.6px;top:1107.09px"><span style="letter-spacing:-0.35px">¥2,309</span></div>
<div class="b" style="left:2073.3px;top:1121.69px;width:1.6px;background:#b5c1e9"></div>
<div class="c n" style="right:360.6px;top:1107.09px"><span style="letter-spacing:-1.80px">0%</span></div>
<div class="b" style="left:2203.3px;top:1121.69px;width:1.0px;background:#c3cae4"></div>
<div class="c n" style="right:277.2px;top:1107.09px"><span style="letter-spacing:0.14px">0</span></div>
<div class="b" style="left:2286.7px;top:1121.69px;width:2.2px;background:#2f52b4"></div>
<div class="c n" style="right:53.2px;top:1107.09px"><span style="letter-spacing:-1.36px">-</span></div>
<div class="b" style="left:2510.7px;top:1121.69px;width:2.2px;background:#2f52b4"></div>
<div class="c" style="left:48px;top:1160.01px"><span style="letter-spacing:-0.02px">17.</span></div>
<div class="c" style="left:134px;top:1160.01px"><span style="letter-spacing:-0.59px">Web</span>マーケティング<span style="letter-spacing:-0.72px"> </span>セミナー</div>
<div class="c" style="left:540px;top:1160.01px"><span style="letter-spacing:-0.59px">Web</span>マーケ学習</div>
<div class="c n" style="right:1365.5px;top:1160.01px"><span style="letter-spacing:-0.35px">¥3,905</span></div>
<div class="b" style="left:1199.7px;top:1174.61px;width:2.1px;background:#2f52b4"></div>
<div class="c n" style="right:1245.8px;top:1160.01px"><span style="letter-spacing:0.14px">5</span></div>
<div class="b" style="left:1319.0px;top:1174.61px;width:1.0px;background:#c3cae4"></div>
<div class="c n" style="right:989.2px;top:1160.01px"><span style="letter-spacing:-0.23px">¥780,961</span></div>
<div class="b" style="left:1575.4px;top:1174.61px;width:1.0px;background:#c3cae4"></div>
<div class="c n" style="right:866.6px;top:1160.01px"><span style="letter-spacing:-1.16px">20%</span></div>
<div class="b" style="left:1697.3px;top:1174.61px;width:9.2px;background:#b5c1e9"></div>
<div class="c n" style="right:769.2px;top:1160.01px"><span style="letter-spacing:0.14px">1</span></div>
<div class="b" style="left:1796.0px;top:1174.61px;width:1.1px;background:#c3cae4"></div>
<div class="c n" style="right:490.6px;top:1160.01px"><span style="letter-spacing:-0.35px">¥3,905</span></div>
<div class="b" style="left:2073.3px;top:1174.61px;width:2.0px;background:#b5c1e9"></div>
<div class="c n" style="right:360.6px;top:1160.01px"><span style="letter-spacing:-1.80px">0%</span></div>
<div class="b" style="left:2203.3px;top:1174.61px;width:1.0px;background:#c3cae4"></div>
<div class="c n" style="right:277.2px;top:1160.01px"><span style="letter-spacing:0.14px">0</span></div>
<div class="b" style="left:2286.7px;top:1174.61px;width:2.2px;background:#2f52b4"></div>
<div class="c n" style="right:53.2px;top:1160.01px"><span style="letter-spacing:-1.36px">-</span></div>
<div class="b" style="left:2510.7px;top:1174.61px;width:2.2px;background:#2f52b4"></div>
<div class="stripe" style="top:1212.92px"></div>
<div class="c" style="left:48px;top:1212.92px"><span style="letter-spacing:-0.02px">18.</span></div>
<div class="c" style="left:134px;top:1212.92px">広告運用<span style="letter-spacing:-0.72px"> </span>セミナー</div>
<div class="c" style="left:540px;top:1212.92px"><span style="letter-spacing:-0.59px">Web</span>マーケ学習</div>
<div class="c n" style="right:1365.5px;top:1212.92px"><span style="letter-spacing:-0.35px">¥3,135</span></div>
<div class="b" style="left:1199.7px;top:1227.52px;width:2.1px;background:#2f52b4"></div>
<div class="c n" style="right:1245.8px;top:1212.92px"><span style="letter-spacing:0.14px">6</span></div>
<div class="b" style="left:1319.0px;top:1227.52px;width:1.0px;background:#c3cae4"></div>
<div class="c n" style="right:989.2px;top:1212.92px"><span style="letter-spacing:-0.23px">¥522,474</span></div>
<div class="b" style="left:1575.4px;top:1227.52px;width:1.0px;background:#c3cae4"></div>
<div class="c n" style="right:866.6px;top:1212.92px"><span style="letter-spacing:-0.59px">16.67%</span></div>
<div class="b" style="left:1697.3px;top:1227.52px;width:7.6px;background:#b5c1e9"></div>
<div class="c n" style="right:769.2px;top:1212.92px"><span style="letter-spacing:0.14px">1</span></div>
<div class="b" style="left:1796.0px;top:1227.52px;width:1.1px;background:#c3cae4"></div>
<div class="c n" style="right:490.6px;top:1212.92px"><span style="letter-spacing:-0.35px">¥3,135</span></div>
<div class="b" style="left:2073.3px;top:1227.52px;width:1.6px;background:#b5c1e9"></div>
<div class="c n" style="right:360.6px;top:1212.92px"><span style="letter-spacing:-1.80px">0%</span></div>
<div class="b" style="left:2203.3px;top:1227.52px;width:1.0px;background:#c3cae4"></div>
<div class="c n" style="right:277.2px;top:1212.92px"><span style="letter-spacing:0.14px">0</span></div>
<div class="b" style="left:2286.7px;top:1227.52px;width:2.2px;background:#2f52b4"></div>
<div class="c n" style="right:53.2px;top:1212.92px"><span style="letter-spacing:-1.36px">-</span></div>
<div class="b" style="left:2510.7px;top:1227.52px;width:2.2px;background:#2f52b4"></div>
<div class="c" style="left:48px;top:1265.84px"><span style="letter-spacing:-0.02px">19.</span></div>
<div class="c" style="left:134px;top:1265.84px">デジタル<span style="letter-spacing:-0.72px"> </span>マーケティング<span style="letter-spacing:-0.72px"> </span>スクール</div>
<div class="c" style="left:540px;top:1265.84px"><span style="letter-spacing:-0.59px">Web</span>マーケ学習</div>
<div class="c n" style="right:1365.5px;top:1265.84px"><span style="letter-spacing:-0.35px">¥3,085</span></div>
<div class="b" style="left:1199.7px;top:1280.44px;width:2.1px;background:#2f52b4"></div>
<div class="c n" style="right:1245.8px;top:1265.84px"><span style="letter-spacing:0.14px">8</span></div>
<div class="b" style="left:1319.0px;top:1280.44px;width:1.0px;background:#c3cae4"></div>
<div class="c n" style="right:989.2px;top:1265.84px"><span style="letter-spacing:-0.23px">¥385,606</span></div>
<div class="b" style="left:1575.4px;top:1280.44px;width:1.0px;background:#c3cae4"></div>
<div class="c n" style="right:866.6px;top:1265.84px"><span style="letter-spacing:-0.74px">12.5%</span></div>
<div class="b" style="left:1697.3px;top:1280.44px;width:5.7px;background:#b5c1e9"></div>
<div class="c n" style="right:769.2px;top:1265.84px"><span style="letter-spacing:0.14px">1</span></div>
<div class="b" style="left:1796.0px;top:1280.44px;width:1.1px;background:#c3cae4"></div>
<div class="c n" style="right:490.6px;top:1265.84px"><span style="letter-spacing:-0.35px">¥3,085</span></div>
<div class="b" style="left:2073.3px;top:1280.44px;width:1.6px;background:#b5c1e9"></div>
<div class="c n" style="right:360.6px;top:1265.84px"><span style="letter-spacing:-1.80px">0%</span></div>
<div class="b" style="left:2203.3px;top:1280.44px;width:1.0px;background:#c3cae4"></div>
<div class="c n" style="right:277.2px;top:1265.84px"><span style="letter-spacing:0.14px">0</span></div>
<div class="b" style="left:2286.7px;top:1280.44px;width:2.2px;background:#2f52b4"></div>
<div class="c n" style="right:53.2px;top:1265.84px"><span style="letter-spacing:-1.36px">-</span></div>
<div class="b" style="left:2510.7px;top:1280.44px;width:2.2px;background:#2f52b4"></div>
<div class="stripe" style="top:1318.75px"></div>
<div class="c" style="left:48px;top:1318.75px"><span style="letter-spacing:-0.02px">20.</span></div>
<div class="c" style="left:134px;top:1318.75px"><span style="letter-spacing:-0.12px">web </span>広告<span style="letter-spacing:-0.72px"> </span>スクール</div>
<div class="c" style="left:540px;top:1318.75px"><span style="letter-spacing:-0.59px">Web</span>マーケ学習</div>
<div class="c n" style="right:1365.5px;top:1318.75px"><span style="letter-spacing:-0.35px">¥2,915</span></div>
<div class="b" style="left:1199.7px;top:1333.35px;width:2.1px;background:#2f52b4"></div>
<div class="c n" style="right:1245.8px;top:1318.75px"><span style="letter-spacing:0.14px">5</span></div>
<div class="b" style="left:1319.0px;top:1333.35px;width:1.0px;background:#c3cae4"></div>
<div class="c n" style="right:989.2px;top:1318.75px"><span style="letter-spacing:-0.23px">¥582,971</span></div>
<div class="b" style="left:1575.4px;top:1333.35px;width:1.0px;background:#c3cae4"></div>
<div class="c n" style="right:866.6px;top:1318.75px"><span style="letter-spacing:-1.16px">20%</span></div>
<div class="b" style="left:1697.3px;top:1333.35px;width:9.2px;background:#b5c1e9"></div>
<div class="c n" style="right:769.2px;top:1318.75px"><span style="letter-spacing:0.14px">1</span></div>
<div class="b" style="left:1796.0px;top:1333.35px;width:1.1px;background:#c3cae4"></div>
<div class="c n" style="right:490.6px;top:1318.75px"><span style="letter-spacing:-0.35px">¥2,915</span></div>
<div class="b" style="left:2073.3px;top:1333.35px;width:1.6px;background:#b5c1e9"></div>
<div class="c n" style="right:360.6px;top:1318.75px"><span style="letter-spacing:-1.80px">0%</span></div>
<div class="b" style="left:2203.3px;top:1333.35px;width:1.0px;background:#c3cae4"></div>
<div class="c n" style="right:277.2px;top:1318.75px"><span style="letter-spacing:0.14px">0</span></div>
<div class="b" style="left:2286.7px;top:1333.35px;width:2.2px;background:#2f52b4"></div>
<div class="c n" style="right:53.2px;top:1318.75px"><span style="letter-spacing:-1.36px">-</span></div>
<div class="b" style="left:2510.7px;top:1333.35px;width:2.2px;background:#2f52b4"></div>
<div class="c" style="left:48px;top:1371.67px"><span style="letter-spacing:-0.02px">21.</span></div>
<div class="c" style="left:134px;top:1371.67px">google 広告<span style="letter-spacing:-0.72px"> </span>セミナー</div>
<div class="c" style="left:540px;top:1371.67px"><span style="letter-spacing:-0.59px">Web</span>マーケ学習</div>
<div class="c n" style="right:1365.5px;top:1371.67px"><span style="letter-spacing:-0.35px">¥2,835</span></div>
<div class="b" style="left:1199.7px;top:1386.27px;width:2.1px;background:#2f52b4"></div>
<div class="c n" style="right:1245.8px;top:1371.67px"><span style="letter-spacing:0.14px">21</span></div>
<div class="b" style="left:1319.0px;top:1386.27px;width:1.0px;background:#c3cae4"></div>
<div class="c n" style="right:989.2px;top:1371.67px"><span style="letter-spacing:-0.23px">¥134,993</span></div>
<div class="b" style="left:1575.4px;top:1386.27px;width:1.0px;background:#c3cae4"></div>
<div class="c n" style="right:866.6px;top:1371.67px"><span style="letter-spacing:-0.74px">4.76%</span></div>
<div class="b" style="left:1697.3px;top:1386.27px;width:2.2px;background:#b5c1e9"></div>
<div class="c n" style="right:769.2px;top:1371.67px"><span style="letter-spacing:0.14px">1</span></div>
<div class="b" style="left:1796.0px;top:1386.27px;width:1.1px;background:#c3cae4"></div>
<div class="c n" style="right:490.6px;top:1371.67px"><span style="letter-spacing:-0.35px">¥2,835</span></div>
<div class="b" style="left:2073.3px;top:1386.27px;width:1.6px;background:#b5c1e9"></div>
<div class="c n" style="right:360.6px;top:1371.67px"><span style="letter-spacing:-1.80px">0%</span></div>
<div class="b" style="left:2203.3px;top:1386.27px;width:1.0px;background:#c3cae4"></div>
<div class="c n" style="right:277.2px;top:1371.67px"><span style="letter-spacing:0.14px">0</span></div>
<div class="b" style="left:2286.7px;top:1386.27px;width:2.2px;background:#2f52b4"></div>
<div class="c n" style="right:53.2px;top:1371.67px"><span style="letter-spacing:-1.36px">-</span></div>
<div class="b" style="left:2510.7px;top:1386.27px;width:2.2px;background:#2f52b4"></div>
<div class="stripe" style="top:1424.59px"></div>
<div class="c" style="left:48px;top:1424.59px"><span style="letter-spacing:-0.02px">22.</span></div>
<div class="c" style="left:134px;top:1424.59px"><span style="letter-spacing:-1.59px">WEB</span>広告<span style="letter-spacing:-0.72px"> </span>セミナー</div>
<div class="c" style="left:540px;top:1424.59px"><span style="letter-spacing:-0.59px">Web</span>マーケ学習</div>
<div class="c n" style="right:1365.5px;top:1424.59px"><span style="letter-spacing:-0.35px">¥2,290</span></div>
<div class="b" style="left:1199.7px;top:1439.19px;width:2.1px;background:#2f52b4"></div>
<div class="c n" style="right:1245.8px;top:1424.59px"><span style="letter-spacing:1.03px">11</span></div>
<div class="b" style="left:1319.0px;top:1439.19px;width:1.0px;background:#c3cae4"></div>
<div class="c n" style="right:989.2px;top:1424.59px"><span style="letter-spacing:-0.23px">¥208,171</span></div>
<div class="b" style="left:1575.4px;top:1439.19px;width:1.0px;background:#c3cae4"></div>
<div class="c n" style="right:866.6px;top:1424.59px"><span style="letter-spacing:-0.74px">9.09%</span></div>
<div class="b" style="left:1697.3px;top:1439.19px;width:4.2px;background:#b5c1e9"></div>
<div class="c n" style="right:769.2px;top:1424.59px"><span style="letter-spacing:0.14px">1</span></div>
<div class="b" style="left:1796.0px;top:1439.19px;width:1.1px;background:#c3cae4"></div>
<div class="c n" style="right:490.6px;top:1424.59px"><span style="letter-spacing:-0.35px">¥2,290</span></div>
<div class="b" style="left:2073.3px;top:1439.19px;width:1.6px;background:#b5c1e9"></div>
<div class="c n" style="right:360.6px;top:1424.59px"><span style="letter-spacing:-1.80px">0%</span></div>
<div class="b" style="left:2203.3px;top:1439.19px;width:1.0px;background:#c3cae4"></div>
<div class="c n" style="right:277.2px;top:1424.59px"><span style="letter-spacing:0.14px">0</span></div>
<div class="b" style="left:2286.7px;top:1439.19px;width:2.2px;background:#2f52b4"></div>
<div class="c n" style="right:53.2px;top:1424.59px"><span style="letter-spacing:-1.36px">-</span></div>
<div class="b" style="left:2510.7px;top:1439.19px;width:2.2px;background:#2f52b4"></div>
<!-- totals -->
<div class="tot" style="left:539px;top:1484.2px;font-size:23.6px">総計</div>
<div class="tot" style="left:1072px"><span style="letter-spacing:0.10px">¥1,328,558</span></div>
<div class="tot" style="left:1239.5px"><span style="letter-spacing:0.18px">7,524</span></div>
<div class="tot" style="left:1431px"><span style="letter-spacing:0.16px">¥176,576</span></div>
<div class="tot" style="left:1601.5px"><span style="letter-spacing:-0.41px">3.43%</span></div>
<div class="tot" style="left:1747px"><span style="letter-spacing:0.42px">258</span></div>
<div class="tot" style="left:1963px"><span style="letter-spacing:0.08px">¥5,149</span></div>
<div class="tot" style="left:2108px"><span style="letter-spacing:-0.41px">5.04%</span></div>
<div class="tot" style="left:2255px"><span style="letter-spacing:0.42px">13</span></div>
<div class="tot" style="left:2384.5px"><span style="letter-spacing:0.16px">¥102,197</span></div>
<!-- pagination -->
<div class="abs" style="left:2249px;top:1531px;font-size:23.5px;line-height:36px;color:#45484c">1 - 121 / 121</div>
<svg class="abs" style="left:2416px;top:1530px" width="96" height="38" viewBox="2416 1530 96 38" fill="none" stroke-width="3.6">
<polyline points="2436,1538.3 2425.8,1549 2436,1559.7" stroke="#bdbdbd"/>
<polyline points="2490.2,1538.3 2500.4,1549 2490.2,1559.7" stroke="#b3b3b3"/>
</svg>
<!-- comment box -->
<div class="abs" style="left:33.5px;top:1586px;width:2492.5px;height:153px;border:2.6px solid #d6d6d6"></div>
<div class="abs" style="left:48.5px;top:1599.8px;font-size:27px;line-height:40px;letter-spacing:0.6px;color:#262626">コメント記入欄</div>
<!-- footer -->
<div class="abs" style="left:47px;top:1757px;font-size:20.6px;line-height:30px;color:#262626"><span style="letter-spacing:0.12px">* </span>対象キャンペーン：検索キャンペーン</div>
<div class="abs" style="left:1265px;top:1754px;font-size:25px;line-height:36px;color:#222">22</div>
<svg class="abs" style="left:2400px;top:1755px" width="140" height="40" viewBox="2400 1755 140 40">
<text x="2414.5" y="1783" font-family="Liberation Sans, sans-serif" font-size="21.5" font-weight="700" fill="#fff" stroke="#5a5a5a" stroke-width="1.1" textLength="106.5" lengthAdjust="spacingAndGlyphs">YOURLOGO</text>
<line x1="2437" y1="1785.6" x2="2499" y2="1785.6" stroke="#cfcfcf" stroke-width="1.2"/>
</svg>
</body>
</html>
